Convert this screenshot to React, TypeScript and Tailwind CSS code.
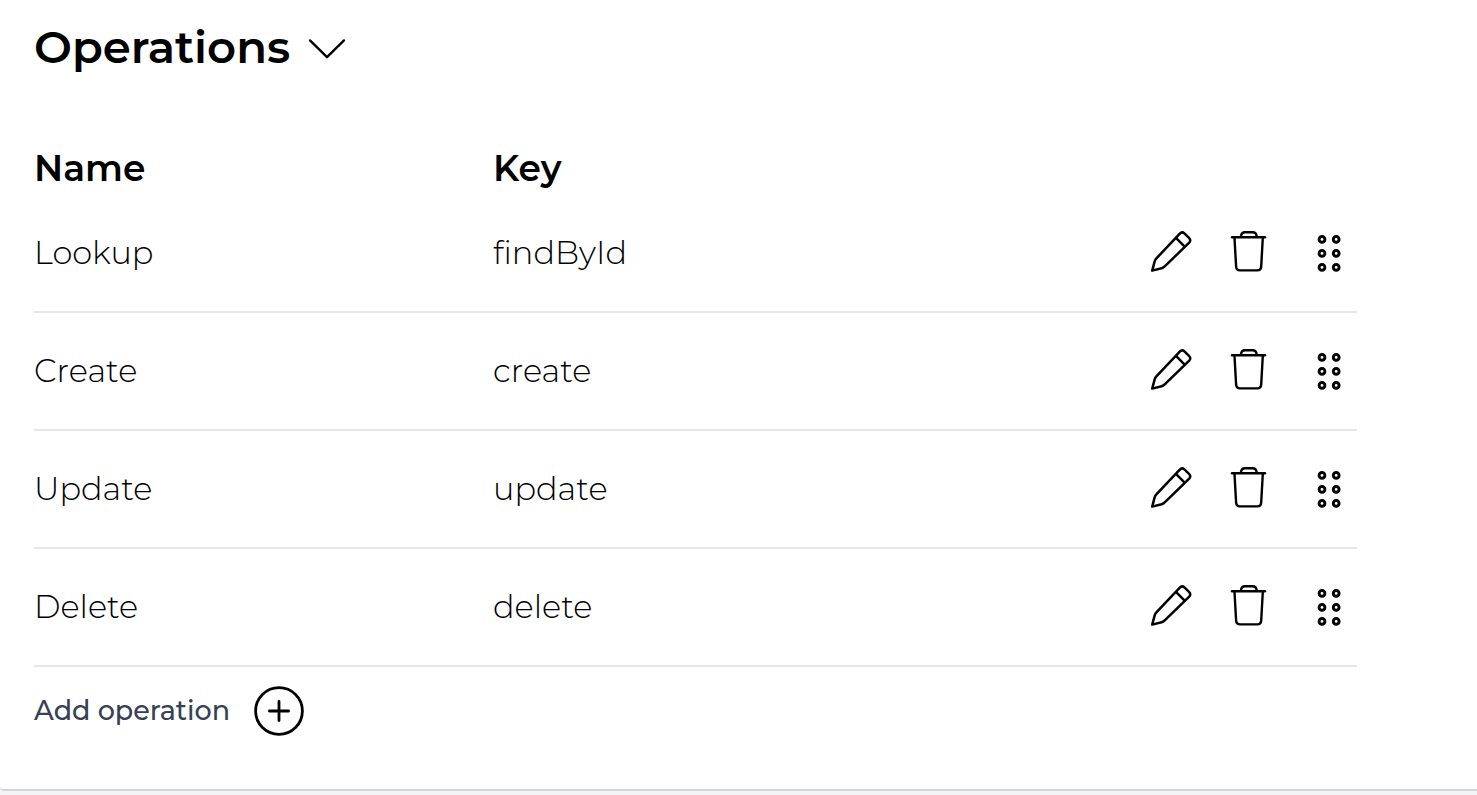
type Operation = {
  name: string;
  key: string;
};

const OPERATIONS: Operation[] = [
  { name: 'Lookup', key: 'findById' },
  { name: 'Create', key: 'create' },
  { name: 'Update', key: 'update' },
  { name: 'Delete', key: 'delete' },
];

const ChevronIcon = () => (
  <svg width="38" height="24" viewBox="0 0 38 24" fill="none" stroke="currentColor" strokeWidth="2.4" strokeLinecap="round" strokeLinejoin="round" aria-hidden="true">
    <path d="M2 5.4 19 22.2 36 5.4" />
  </svg>
);

const PencilIcon = () => (
  <svg width="42" height="46" viewBox="0 0 42 46" fill="none" stroke="currentColor" strokeWidth="2.5" strokeLinecap="round" strokeLinejoin="round" aria-hidden="true">
    <path d="M2.2 40.6 4.6 31.6Q5.2 29.6 6.6 28.2L29.8 3.6Q32 1.2 34.4 3.4L39 7.8Q41.4 10.2 39.2 12.6L15 36.2Q13.6 37.6 11.6 38.2Z" />
    <path d="M26.2 8.2 34.4 16.4" />
  </svg>
);

const TrashIcon = () => (
  <svg width="42" height="46" viewBox="0 0 42 46" fill="none" stroke="currentColor" strokeWidth="2.4" strokeLinecap="round" strokeLinejoin="round" aria-hidden="true">
    <path d="M4 7.2H37" />
    <path d="M12.9 6.5Q13.4 2.3 17 2.3H24.6Q28.2 2.3 28.7 6.5" />
    <path d="M6.5 8 8.1 36.4Q8.4 40.4 12 40.4H29.4Q33 40.4 33.2 36.4L34.8 8" />
  </svg>
);

const DragIcon = () => (
  <svg width="42" height="46" viewBox="0 0 42 46" fill="none" stroke="currentColor" strokeWidth="2.9" aria-hidden="true">
    {[9.4, 23.4, 37.4].map((cy) => (
      <g key={cy}>
        <circle cx="16" cy={cy} r="2.9" />
        <circle cx="30.2" cy={cy} r="2.9" />
      </g>
    ))}
  </svg>
);

const PlusCircleIcon = () => (
  <svg width="50" height="50" viewBox="0 0 50 50" fill="none" stroke="currentColor" strokeWidth="2.8" strokeLinecap="round" aria-hidden="true">
    <circle cx="25" cy="25" r="23.4" />
    <path d="M15.4 25H34.6M25 15.4V34.6" />
  </svg>
);

const OperationRow = ({ operation }: { operation: Operation }) => (
  <tr className="h-[118px] border-b-2 border-gray-200 text-[32px] leading-10 font-light">
    <td>{operation.name}</td>
    <td>{operation.key}</td>
    <td>
      <div className="flex items-center justify-end gap-9 pr-[9px]">
        <button type="button" aria-label={`Edit ${operation.name}`}>
          <PencilIcon />
        </button>
        <button type="button" aria-label={`Delete ${operation.name}`}>
          <TrashIcon />
        </button>
        <button type="button" aria-label={`Reorder ${operation.name}`} className="cursor-grab">
          <DragIcon />
        </button>
      </div>
    </td>
  </tr>
);

const App = () => {
  return (
    <div className="min-h-screen bg-[#f4f4f4] font-[Montserrat,Inter,sans-serif] text-black">
      <section className="rounded-bl border-b-2 border-gray-300 bg-white pt-[19px] pr-[120px] pb-[53px] pl-[34px]">
        <h2 className="text-[45px] leading-14 font-semibold">
          <button type="button" className="flex items-center gap-[18px]" aria-expanded="true">
            Operations
            <ChevronIcon />
          </button>
        </h2>

        <table className="mt-[66px] w-full table-fixed border-collapse text-left">
          <thead>
            <tr className="h-[53px] text-4xl">
              <th scope="col" className="w-[459px] font-semibold">Name</th>
              <th scope="col" className="w-[459px] font-semibold">Key</th>
              <th scope="col" aria-label="Actions" />
            </tr>
          </thead>
          <tbody>
            {OPERATIONS.map((operation) => (
              <OperationRow key={operation.key} operation={operation} />
            ))}
          </tbody>
        </table>

        <button type="button" className="mt-[19px] flex items-center gap-6 text-[27px] leading-9 font-medium text-gray-700">
          Add operation
          <span className="text-black">
            <PlusCircleIcon />
          </span>
        </button>
      </section>
    </div>
  );
};

export default App;
